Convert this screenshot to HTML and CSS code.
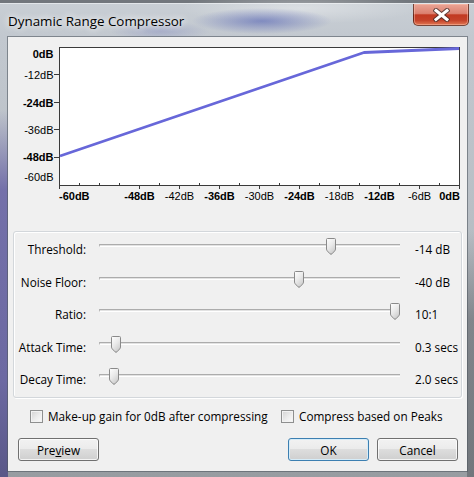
FILE: index.html
```html
<!DOCTYPE html>
<html>
<head>
<meta charset="utf-8">
<title>Dynamic Range Compressor</title>
<link rel="stylesheet" href="styles.css">
</head>
<body>
<div class="window">
  <div class="titlebar">
    <span class="title">Dynamic Range Compressor</span>
    <button class="close" aria-label="Close">
      <svg width="17" height="14" viewBox="0 0 17 14">
        <path d="M3 2.5 L14 11.5 M14 2.5 L3 11.5" stroke="#3a2a28" stroke-opacity="0.75" stroke-width="5" stroke-linecap="square"/>
        <path d="M3 2.5 L14 11.5 M14 2.5 L3 11.5" stroke="#ffffff" stroke-width="3" stroke-linecap="square"/>
      </svg>
    </button>
  </div>
  <div class="client">
    <svg class="graph" width="459" height="194" viewBox="0 0 459 194">
      <defs>
        <linearGradient id="thumbfill" x1="0" y1="0" x2="0.6" y2="1">
          <stop offset="0" stop-color="#ffffff"/>
          <stop offset="0.55" stop-color="#e9e9e9"/>
          <stop offset="1" stop-color="#cdcdcd"/>
        </linearGradient>
      </defs>
      <rect x="51.5" y="10.5" width="400" height="138" fill="#ffffff" stroke="#3a3a3a"/>
      <g stroke="#3a3a3a" stroke-width="1">
        <path d="M46 37.5 H51 M46 65.5 H51 M46 92.5 H51 M46 120.5 H51"/>
        <path d="M51.5 148 V152 M131.5 148 V152 M171.5 148 V152 M211.5 148 V152 M251.5 148 V152 M291.5 148 V152 M331.5 148 V152 M371.5 148 V152 M411.5 148 V152 M451.5 148 V152"/>
        <path d="M71.5 146 V148 M91.5 146 V148 M111.5 146 V148 M151.5 146 V148 M191.5 146 V148 M231.5 146 V148 M271.5 146 V148 M311.5 146 V148 M351.5 146 V148 M391.5 146 V148 M431.5 146 V148"/>
      </g>
      <polyline points="52,119 356,15.5 451,11.5" fill="none" stroke="#6767d9" stroke-width="2.8" stroke-linejoin="round"/>
      <g class="axis">
        <text x="45.5" y="21" text-anchor="end" class="major">0dB</text>
        <text x="45.5" y="42" text-anchor="end">-12dB</text>
        <text x="45.5" y="69.5" text-anchor="end" class="major">-24dB</text>
        <text x="45.5" y="97" text-anchor="end">-36dB</text>
        <text x="45.5" y="124" text-anchor="end" class="major">-48dB</text>
        <text x="45.5" y="144" text-anchor="end">-60dB</text>

        <text x="51" y="163" class="major">-60dB</text>
        <text x="131.5" y="163" text-anchor="middle" class="major">-48dB</text>
        <text x="171.5" y="163" text-anchor="middle">-42dB</text>
        <text x="211.5" y="163" text-anchor="middle" class="major">-36dB</text>
        <text x="251.5" y="163" text-anchor="middle">-30dB</text>
        <text x="291.5" y="163" text-anchor="middle" class="major">-24dB</text>
        <text x="331.5" y="163" text-anchor="middle">-18dB</text>
        <text x="371.5" y="163" text-anchor="middle" class="major">-12dB</text>
        <text x="411.5" y="163" text-anchor="middle">-6dB</text>
        <text x="452" y="163" text-anchor="end" class="major">0dB</text>
      </g>
    </svg>

    <div class="group">
      <div class="row">
        <span class="label">Threshold:</span>
        <div class="slider">
          <div class="track"></div>
          <svg class="thumb" style="left:227px" width="10" height="17" viewBox="0 0 10 17"><path d="M1.5 0.5 H8.5 Q9.5 0.5 9.5 1.5 V11 Q9.5 12 8.8 12.8 L6 15.8 Q5 16.8 4 15.8 L1.2 12.8 Q0.5 12 0.5 11 V1.5 Q0.5 0.5 1.5 0.5 Z" fill="url(#thumbfill)" stroke="#8a8a8a"/></svg>
        </div>
        <span class="value">-14 dB</span>
      </div>
      <div class="row">
        <span class="label">Noise Floor:</span>
        <div class="slider">
          <div class="track"></div>
          <svg class="thumb" style="left:195px" width="10" height="17" viewBox="0 0 10 17"><path d="M1.5 0.5 H8.5 Q9.5 0.5 9.5 1.5 V11 Q9.5 12 8.8 12.8 L6 15.8 Q5 16.8 4 15.8 L1.2 12.8 Q0.5 12 0.5 11 V1.5 Q0.5 0.5 1.5 0.5 Z" fill="url(#thumbfill)" stroke="#8a8a8a"/></svg>
        </div>
        <span class="value">-40 dB</span>
      </div>
      <div class="row">
        <span class="label">Ratio:</span>
        <div class="slider">
          <div class="track"></div>
          <svg class="thumb" style="left:291px" width="10" height="17" viewBox="0 0 10 17"><path d="M1.5 0.5 H8.5 Q9.5 0.5 9.5 1.5 V11 Q9.5 12 8.8 12.8 L6 15.8 Q5 16.8 4 15.8 L1.2 12.8 Q0.5 12 0.5 11 V1.5 Q0.5 0.5 1.5 0.5 Z" fill="url(#thumbfill)" stroke="#8a8a8a"/></svg>
        </div>
        <span class="value">10:1</span>
      </div>
      <div class="row">
        <span class="label">Attack Time:</span>
        <div class="slider">
          <div class="track"></div>
          <svg class="thumb" style="left:12px" width="10" height="17" viewBox="0 0 10 17"><path d="M1.5 0.5 H8.5 Q9.5 0.5 9.5 1.5 V11 Q9.5 12 8.8 12.8 L6 15.8 Q5 16.8 4 15.8 L1.2 12.8 Q0.5 12 0.5 11 V1.5 Q0.5 0.5 1.5 0.5 Z" fill="url(#thumbfill)" stroke="#8a8a8a"/></svg>
        </div>
        <span class="value">0.3 secs</span>
      </div>
      <div class="row">
        <span class="label">Decay Time:</span>
        <div class="slider">
          <div class="track"></div>
          <svg class="thumb" style="left:10px" width="10" height="17" viewBox="0 0 10 17"><path d="M1.5 0.5 H8.5 Q9.5 0.5 9.5 1.5 V11 Q9.5 12 8.8 12.8 L6 15.8 Q5 16.8 4 15.8 L1.2 12.8 Q0.5 12 0.5 11 V1.5 Q0.5 0.5 1.5 0.5 Z" fill="url(#thumbfill)" stroke="#8a8a8a"/></svg>
        </div>
        <span class="value">2.0 secs</span>
      </div>
    </div>

    <div class="checks">
      <label class="check"><span class="box"></span><span>Make-up gain for 0dB after compressing</span></label>
      <label class="check"><span class="box"></span><span>Compress based on Peaks</span></label>
    </div>

    <div class="buttons">
      <button class="btn">Pre<u>v</u>iew</button>
      <span class="spacer"></span>
      <button class="btn default">OK</button>
      <button class="btn">Cancel</button>
    </div>
  </div>
</div>
</body>
</html>
```

FILE: styles.css
```css
* { box-sizing: border-box; }

html, body {
  margin: 0;
  padding: 0;
}

body {
  width: 474px;
  height: 477px;
  overflow: hidden;
  font-family: "Open Sans", "Noto Sans", sans-serif;
  font-size: 11.75px;
  color: #000;
  background: #9aa0a6;
}

.window {
  width: 474px;
  height: 477px;
  display: flex;
  flex-direction: column;
  padding: 0 7px 0 8px;
  background:
    linear-gradient(to bottom, rgba(112,108,168,0) 110px, rgba(112,108,168,0.95) 190px, #6c69a2 380px, #5a5888 477px) left top / 8px 100% no-repeat,
    linear-gradient(to bottom, rgba(90,94,100,0) 230px, rgba(90,94,100,0.55) 320px, rgba(90,94,100,0.6) 477px) right top / 7px 100% no-repeat,
    radial-gradient(ellipse 70px 13px at 262px 21px, rgba(70,85,175,0.55), rgba(70,85,175,0)),
    radial-gradient(ellipse 50px 10px at 160px 31px, rgba(90,100,180,0.28), rgba(90,100,180,0)),
    radial-gradient(ellipse 120px 16px at 300px 8px, rgba(255,255,255,0.35), rgba(255,255,255,0)),
    linear-gradient(to bottom, #72777d 0, #72777d 3px, #e2e6ea 3px, #e2e6ea 4px, transparent 4px),
    linear-gradient(to bottom, #c9cfd5 0, #c2c8cf 37px, #b4bac0 300px, #979ca1 477px);
}

.titlebar {
  height: 37px;
  flex: none;
  display: flex;
  align-items: flex-start;
}

.title {
  margin-top: 12px;
  line-height: 18px;
  font-size: 13.4px;
  color: #000;
  text-shadow: 0 0 6px rgba(255,255,255,0.95), 0 0 10px rgba(255,255,255,0.8);
}

.close {
  margin-left: auto;
  margin-top: 4px;
  margin-right: -2px;
  width: 56px;
  height: 22px;
  padding: 0;
  border: 1px solid rgba(70,30,20,0.7);
  border-top: none;
  border-radius: 0 0 5px 5px;
  background: linear-gradient(to bottom, #eaa596 0%, #db8170 45%, #c23a22 52%, #c5432a 78%, #e17752 100%);
  box-shadow: inset 0 0 0 1px rgba(255,200,180,0.45);
  display: flex;
  align-items: center;
  justify-content: center;
}

.close svg { display: block; }

.client {
  height: 434px;
  flex: none;
  background: #f0f0f0;
  display: flex;
  flex-direction: column;
  box-shadow: 0 0 0 1px rgba(80,88,96,0.6);
}

.graph {
  display: block;
  flex: none;
}

.axis text {
  font-family: "Liberation Sans", Arial, sans-serif;
  font-size: 11px;
  fill: #000;
}

.axis text.major {
  font-weight: bold;
}

.group {
  margin: 0 5px;
  height: 167px;
  flex: none;
  padding-top: 1px;
  border: 1px solid #d3d7db;
  border-radius: 3px;
  box-shadow: inset 1px 1px 0 #ffffff, 1px 1px 0 #ffffff;
}

.row {
  height: 32.5px;
  display: flex;
  align-items: center;
}

.label {
  width: 72px;
  margin-right: 13px;
  text-align: right;
  white-space: nowrap;
}

.slider {
  position: relative;
  width: 301px;
  height: 17px;
  margin-bottom: 5px;
  flex: none;
}

.track {
  margin-top: 6px;
  height: 3px;
  border-top: 1px solid #acacac;
  border-bottom: 1px solid #ffffff;
  border-left: 1px solid #b8b8b8;
  background: #e2e2e2;
}

.thumb {
  position: absolute;
  top: 0;
  display: block;
}

.value {
  margin-left: 15px;
  white-space: nowrap;
}

.checks {
  margin-top: 12px;
  height: 13px;
  flex: none;
  padding-left: 22px;
  display: grid;
  grid-template-columns: 251px auto;
  align-items: center;
}

.check {
  display: flex;
  align-items: center;
  gap: 5px;
  line-height: 13px;
  white-space: nowrap;
}

.box {
  width: 13px;
  height: 13px;
  flex: none;
  border: 1px solid #8e8f8f;
  background: linear-gradient(135deg, #d2d2d2 0%, #ececec 55%, #fbfbfb 100%);
  box-shadow: inset 0 0 0 1px #f2f2f2;
}

.buttons {
  margin-top: 15px;
  flex: none;
  display: flex;
  padding: 0 9px 0 10px;
}

.spacer { flex: 1; }

.btn {
  width: 81px;
  height: 23px;
  padding: 0;
  font-family: "Open Sans", "Noto Sans", sans-serif;
  font-size: 11.75px;
  color: #000;
  border: 1px solid #707070;
  border-radius: 3px;
  background: linear-gradient(to bottom, #f2f2f2 0%, #ebebeb 50%, #dddddd 50%, #cfcfcf 100%);
  box-shadow: inset 0 0 0 1px rgba(255,255,255,0.75);
}

.btn.default {
  margin-right: 8px;
  border-color: #3c7fb1;
  box-shadow: inset 0 0 0 1px #d6ecf8;
}
```
